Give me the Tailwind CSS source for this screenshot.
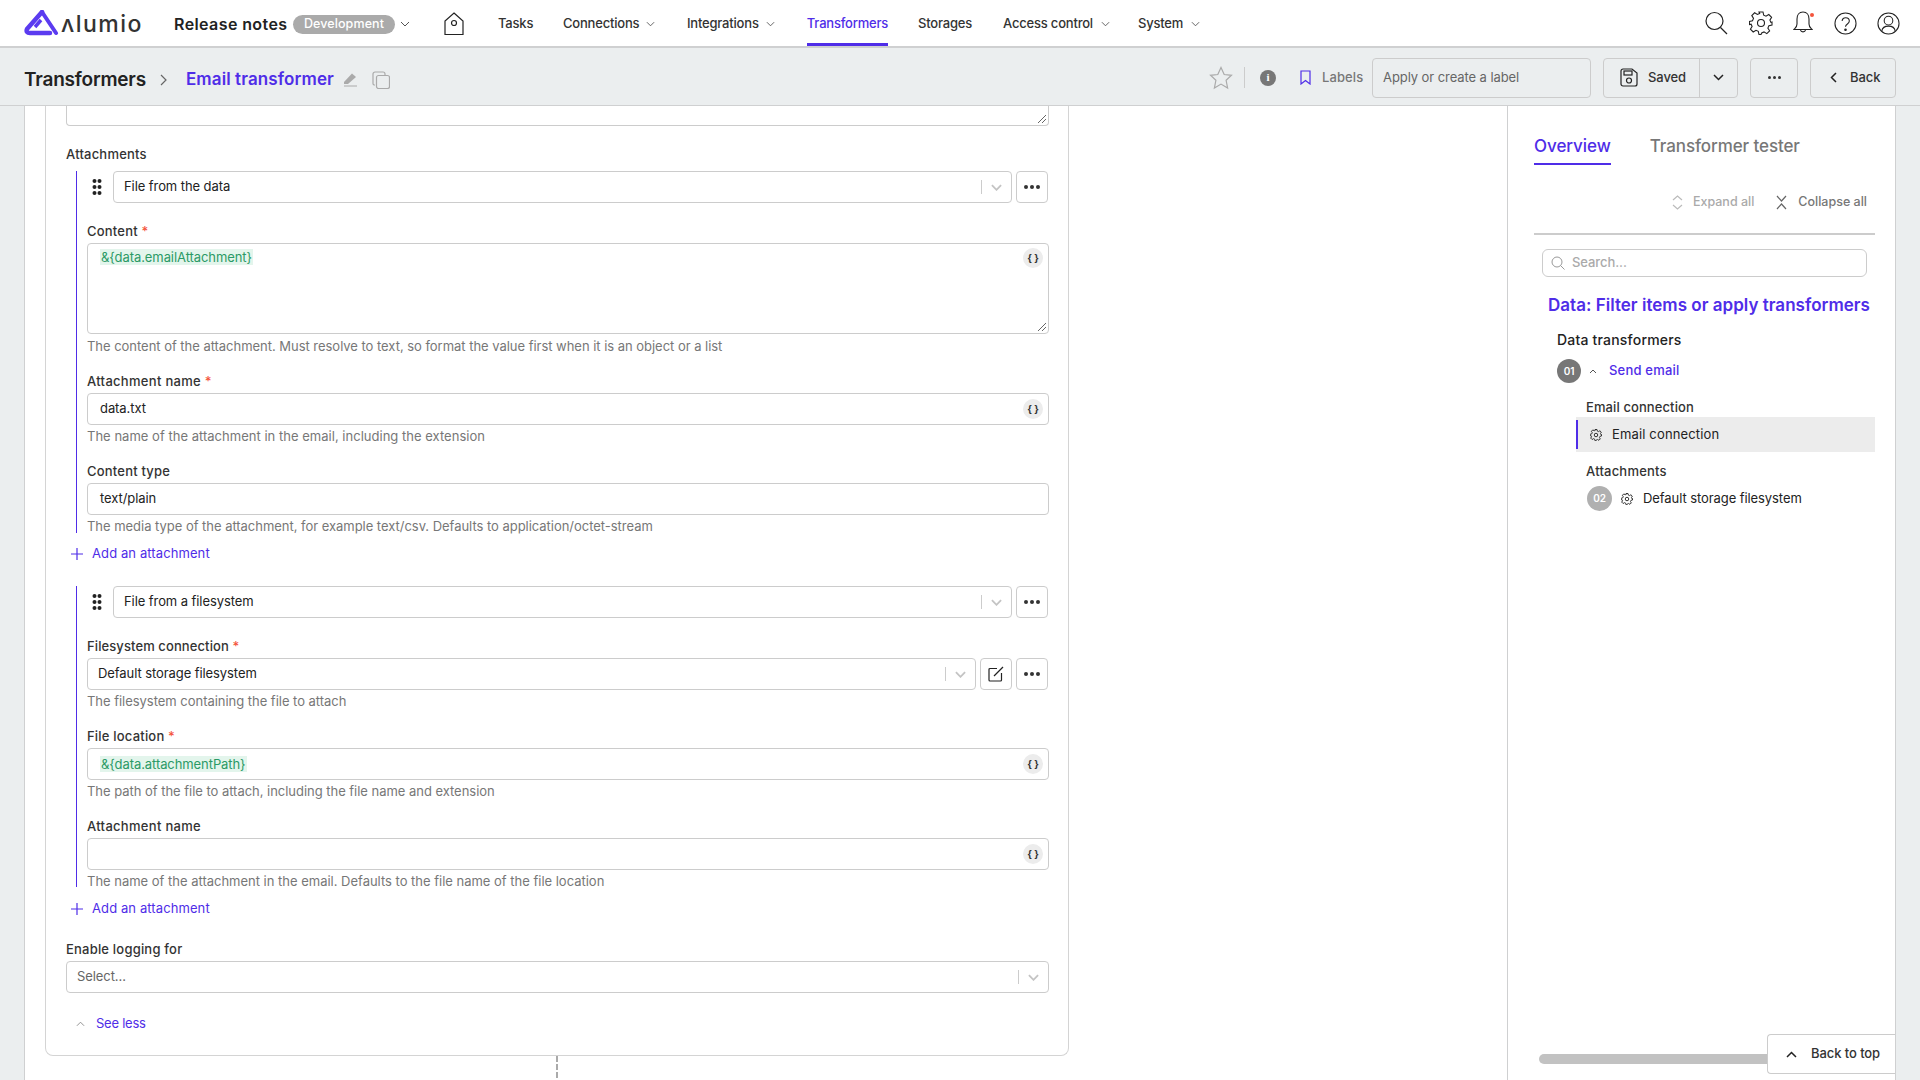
<!DOCTYPE html>
<html lang="en">
<head>
    <meta charset="UTF-8">
    <title>Email transformer - Alumio</title>
    <script src="https://cdn.jsdelivr.net/npm/@tailwindcss/browser@4"></script>
</head>
<body class="h-[1080px] w-[1920px] overflow-hidden flex flex-col bg-[#ebeeef] font-['Inter','Liberation_Sans',sans-serif] text-[13px] text-[#222] tracking-[-0.08px]">
    <!-- Top nav -->
    <header class="h-[48px] shrink-0 bg-white border-b-2 border-[#cfd0d1] flex items-center relative pt-[2px]">
        <svg class="ml-[24px] w-[35px] h-[26px] shrink-0 -mt-[2px]" viewBox="0 0 35 26" fill="none"><path d="M18 2 L3 19 Q1.500 23 6 23 L26 23" stroke="#5b3bf0" stroke-width="4.500" stroke-linecap="round" stroke-linejoin="round"/><path d="M18 2 L32 23" stroke="#5b3bf0" stroke-width="4" stroke-linecap="round"/><path d="M17 10 L11 17" stroke="#5b3bf0" stroke-width="3.500"/></svg>
        <span class="ml-[2px] w-[113px] text-[23px] font-medium text-[#333] tracking-[1.5px] leading-none">ʌlumio</span>
        <span class="text-[16px] font-semibold text-[#222] w-[118px] tracking-[0.4px]">Release notes</span>
        <span class="ml-[1px] w-[102px] h-[19px] rounded-full bg-[#aaa] text-white text-[12.500px] font-medium flex items-center justify-center tracking-[0.1px]">Development</span>
        <svg class="ml-[5px] w-[10px] h-[6px]" viewBox="0 0 10 6" fill="none" stroke="#555"><path d="M1 1l4 4 4-4"/></svg>
        <svg class="ml-[34px] w-[20px] h-[24px]" viewBox="0 0 20 24" fill="none" stroke="#222" stroke-width="1.200"><path d="M10 1 L19 9 V22.500 H1 V9 Z"/><circle cx="10" cy="11" r="2.500"/></svg>
        <nav class="ml-[34px] flex items-center h-full text-[13px] font-medium text-[#333] tracking-[-0.2px]">
            <a class="w-[65px]">Tasks</a>
            <a class="w-[124px] flex items-center gap-[7px]">Connections <svg class="w-[9px] h-[6px]" viewBox="0 0 10 6" fill="none" stroke="#555"><path d="M1 1l4 4 4-4"/></svg></a>
            <a class="w-[120px] flex items-center gap-[7px]">Integrations <svg class="w-[9px] h-[6px]" viewBox="0 0 10 6" fill="none" stroke="#555"><path d="M1 1l4 4 4-4"/></svg></a>
            <a class="w-[81px] h-full flex items-center justify-center text-[#4f2de8] border-b-[3px] pt-[3px] border-[#4f2de8]">Transformers</a>
            <a class="ml-[30px] w-[85px]">Storages</a>
            <a class="w-[135px] flex items-center gap-[8px]">Access control <svg class="w-[9px] h-[6px]" viewBox="0 0 10 6" fill="none" stroke="#555"><path d="M1 1l4 4 4-4"/></svg></a>
            <a class="flex items-center gap-[8px]">System <svg class="w-[9px] h-[6px]" viewBox="0 0 10 6" fill="none" stroke="#555"><path d="M1 1l4 4 4-4"/></svg></a>
        </nav>
        <div class="ml-auto mr-[20px] -mt-[2px] flex items-center">
            <svg class="w-[24px] h-[24px]" viewBox="0 0 24 24" fill="none" stroke="#222" stroke-width="1.200"><circle cx="10.500" cy="10" r="8.500"/><path d="M16.500 16.500 L23 23"/></svg>
            <svg class="ml-[21px] w-[24px] h-[24px]" viewBox="0 0 24 24" fill="none" stroke="#222" stroke-width="1.100"><circle cx="12" cy="12" r="3.500"/><path d="M10 1h4l.7 3.200 2.300 1 2.800-1.700 2.800 2.800-1.700 2.800 1 2.300L23 11v3l-3.100.8-1 2.300 1.700 2.700-2.800 2.800-2.800-1.700-2.300 1L12 23.500h-2l-.7-3.200-2.300-1-2.800 1.700-2.800-2.800 1.700-2.700-1-2.300L.4 13.500V10.500l3.100-.8 1-2.300-1.700-2.800 2.800-2.800 2.800 1.700 2.300-1z"/></svg>
            <svg class="ml-[20px] w-[20px] h-[24px]" viewBox="0 0 20 24" fill="none" stroke="#222" stroke-width="1.100"><path d="M10 1c-4 0-6 3-6 7v5c0 3-1.500 4-3 5.500h18c-1.500-1.500-3-2.500-3-5.500V8c0-4-2-7-6-7z"/><path d="M7.500 19c.5 2.500 4.500 2.500 5 0"/></svg>
            <svg class="ml-[21px] w-[23px] h-[23px]" viewBox="0 0 24 24" fill="none" stroke="#222" stroke-width="1.100"><circle cx="12" cy="12" r="11"/><path d="M8.500 9.500c0-5 7.500-4.500 7.500 0 0 3-4 3-4 6"/><circle cx="12" cy="18.500" r=".8" fill="#222"/></svg>
            <svg class="ml-[20px] w-[23px] h-[23px]" viewBox="0 0 24 24" fill="none" stroke="#222" stroke-width="1.100"><circle cx="12" cy="12" r="11"/><circle cx="12" cy="9" r="4.500"/><path d="M5 20c1-7 13-7 14 0"/></svg>
        </div>
        <span class="absolute left-[1810px] top-[13px] w-[4px] h-[4px] rounded-full bg-[#f4543c]"></span>
    </header>

    <!-- Sub header -->
    <div class="h-[58px] shrink-0 border-b border-[#cfd0d1] flex items-center pt-[2px]">
        <h1 class="ml-[24px] mt-[6px] text-[19px] font-semibold text-[#222] tracking-[-0.2px]">Transformers</h1>
        <svg class="ml-[14px] mt-[4px] w-[7px] h-[12px]" viewBox="0 0 7 12" fill="none" stroke="#666" stroke-width="1.200"><path d="M1 1l5 5-5 5"/></svg>
        <h2 class="ml-[19px] mt-[5px] text-[17px] font-semibold text-[#4f2de8] tracking-[0.1px]">Email transformer</h2>
        <svg class="ml-[9px] mt-[4px] w-[15px] h-[15px]" viewBox="0 0 15 15" fill="#aaa"><path d="M1 10 L9 1.500 L13 5 L5 12 H1z"/><path d="M1 14h13" stroke="#aaa"/></svg>
        <svg class="ml-[14px] mt-[4px] w-[18px] h-[18px]" viewBox="0 0 18 18" fill="none" stroke="#aaa" stroke-width="1.200"><rect x="4.500" y="4.500" width="13" height="13" rx="2"/><path d="M3 14H2a1.500 1.500 0 0 1-1-1.500V3a2 2 0 0 1 2-2h8a2 2 0 0 1 2 2v1"/></svg>
        <div class="ml-auto flex items-center">
            <svg class="w-[24px] h-[24px]" viewBox="0 0 24 24" fill="none" stroke="#aaa" stroke-width="1.200"><path d="M12 1.500l3.200 7 7.300.8-5.400 5 1.500 7.700-6.600-3.900L5.400 22l1.500-7.700-5.400-5 7.300-.8z"/></svg>
            <span class="ml-[11px] w-px h-[21px] bg-[#ccc]"></span>
            <span class="ml-[15px] w-[16px] h-[16px] rounded-full bg-[#777] text-white text-[11px] font-bold flex items-center justify-center font-['Liberation_Serif',serif]">i</span>
            <svg class="ml-[24px] w-[11px] h-[15px]" viewBox="0 0 11 15" fill="none" stroke="#4f2de8" stroke-width="1.200"><path d="M1 1h9v13L5.500 10.500 1 14z"/></svg>
            <span class="ml-[11px] text-[#777] w-[50px] font-medium tracking-[0.1px]">Labels</span>
            <div class="w-[219px] h-[40px] border border-[#ccc] rounded-[4px] flex items-center pl-[10px] text-[#666]">Apply or create a label</div>
            <div class="ml-[12px] w-[135px] h-[40px] border border-[#ccc] rounded-[4px] flex items-center">
                <span class="w-[96px] h-full border-r border-[#ccc] flex items-center pl-[16px] gap-[10px] font-medium text-[#333]">
                    <svg class="w-[18px] h-[19px]" viewBox="0 0 18 19" fill="none" stroke="#222" stroke-width="1.200"><path d="M3 1h9l5 4v11a2 2 0 0 1-2 2H3a2 2 0 0 1-2-2V3a2 2 0 0 1 2-2z"/><rect x="4" y="3" width="8" height="4"/><circle cx="9" cy="12.500" r="2.500"/></svg>
                    Saved
                </span>
                <span class="flex-1 flex items-center justify-center"><svg class="w-[11px] h-[7px]" viewBox="0 0 11 7" fill="none" stroke="#222" stroke-width="1.500"><path d="M1 1l4.500 4.500L10 1"/></svg></span>
            </div>
            <div class="ml-[12px] w-[48px] h-[40px] border border-[#ccc] rounded-[4px] flex items-center justify-center gap-[2px]">
                <i class="w-[3px] h-[3px] rounded-full bg-[#333]"></i><i class="w-[3px] h-[3px] rounded-full bg-[#333]"></i><i class="w-[3px] h-[3px] rounded-full bg-[#333]"></i>
            </div>
            <div class="ml-[12px] mr-[24px] w-[86px] h-[40px] border border-[#ccc] rounded-[4px] flex items-center pl-[19px] gap-[13px] font-medium text-[#333]">
                <svg class="w-[7px] h-[11px]" viewBox="0 0 7 11" fill="none" stroke="#222" stroke-width="1.500"><path d="M6 1L1.500 5.500 6 10"/></svg>
                Back
            </div>
        </div>
    </div>

    <!-- Main -->
    <main class="flex-1 min-h-0 ml-[24px] mr-[24px] bg-white border-x border-[#cfd0d1] flex">
        <div class="w-[1482px] overflow-hidden">
            <div class="ml-[20px] w-[1024px] border-x border-b border-[#d4d4d4] rounded-b-[8px] pl-[20px] pr-[19px] pb-[23px]">
                <div class="h-[20px] border-x border-b border-[#ccc] rounded-b-[4px] flex items-end justify-end">
                    <svg class="w-[9px] h-[9px] mr-[2px] mb-[2px]" viewBox="0 0 9 9" stroke="#666"><path d="M1 9L9 1M5 9L9 5"/></svg>
                </div>
                <div class="mt-[20px] h-[16px] leading-[16px] font-medium text-[#333] tracking-[0.2px]">Attachments</div>

                <!-- Attachment 1 -->
                <div class="mt-[9px] ml-[10px] border-l border-[#4f2de8] pl-[10px]">
                    <div class="flex items-center h-[32px]">
                        <svg class="w-[10px] h-[16px] ml-[5px] mr-[11px]" viewBox="0 0 10 16" fill="#222"><circle cx="2.500" cy="2" r="2"/><circle cx="7.500" cy="2" r="2"/><circle cx="2.500" cy="8" r="2"/><circle cx="7.500" cy="8" r="2"/><circle cx="2.500" cy="14" r="2"/><circle cx="7.500" cy="14" r="2"/></svg>
                        <div class="w-[899px] h-full border border-[#ccc] rounded-[4px] flex items-center pl-[10px]">
                            <span class="flex-1">File from the data</span>
                            <span class="w-px h-[14px] bg-[#ccc]"></span>
                            <svg class="mx-[9px] w-[11px] h-[7px]" viewBox="0 0 12 7" fill="none" stroke="#c4c4c4" stroke-width="2"><path d="M1 1l5 5 5-5"/></svg>
                        </div>
                        <div class="ml-[4px] w-[32px] h-full border border-[#ccc] rounded-[4px] flex items-center justify-center gap-[2px]">
                            <i class="w-[4px] h-[4px] rounded-full bg-[#333]"></i><i class="w-[4px] h-[4px] rounded-full bg-[#333]"></i><i class="w-[4px] h-[4px] rounded-full bg-[#333]"></i>
                        </div>
                    </div>

                    <div class="mt-[20px] h-[16px] leading-[16px] font-medium text-[#333] tracking-[0.2px]">Content <span class="text-[#f4543c]">*</span></div>
                    <div class="mt-[4px] h-[91px] border border-[#ccc] rounded-[4px] flex items-start pl-[12px] pt-[4px] pr-[5px] relative">
                        <span class="mt-[1px] h-[16px] leading-[16px] px-px bg-[#e3f5ec] text-[#2b9a66]">&amp;{data.emailAttachment}</span>
                        <span class="ml-auto w-[20px] h-[20px] rounded-full bg-[#ececec] flex items-center justify-center text-[10px] font-bold text-[#333]">{ }</span>
                        <svg class="absolute right-[2px] bottom-[2px] w-[9px] h-[9px]" viewBox="0 0 9 9" stroke="#666"><path d="M1 9L9 1M5 9L9 5"/></svg>
                    </div>
                    <div class="mt-[4px] h-[16px] leading-[16px] text-[#777] tracking-[-0.03px]">The content of the attachment. Must resolve to text, so format the value first when it is an object or a list</div>

                    <div class="mt-[19px] h-[16px] leading-[16px] font-medium text-[#333] tracking-[0.3px]">Attachment name <span class="text-[#f4543c]">*</span></div>
                    <div class="mt-[4px] h-[32px] border border-[#ccc] rounded-[4px] flex items-center pl-[12px] pr-[5px]">
                        <span class="flex-1">data.txt</span>
                        <span class="w-[20px] h-[20px] rounded-full bg-[#ececec] flex items-center justify-center text-[10px] font-bold text-[#333]">{ }</span>
                    </div>
                    <div class="mt-[3px] h-[16px] leading-[16px] text-[#777] tracking-[0.02px]">The name of the attachment in the email, including the extension</div>

                    <div class="mt-[19px] h-[16px] leading-[16px] font-medium text-[#333] tracking-[0.2px]">Content type</div>
                    <div class="mt-[4px] h-[32px] border border-[#ccc] rounded-[4px] flex items-center pl-[12px] pr-[5px]">text/plain</div>
                    <div class="mt-[3px] h-[15px] leading-[16px] text-[#777] tracking-[-0.03px]">The media type of the attachment, for example text/csv. Defaults to application/octet-stream</div>
                </div>
                <div class="mt-[13px] h-[16px] flex items-center ml-[5px] text-[#4f2de8] tracking-[0.1px]">
                    <svg class="w-[12px] h-[12px] mr-[9px]" viewBox="0 0 12 12" stroke="#4f2de8" stroke-width="1.200"><path d="M6 0v12M0 6h12"/></svg>
                    Add an attachment
                </div>

                <!-- Attachment 2 -->
                <div class="mt-[24px] ml-[10px] border-l border-[#4f2de8] pl-[10px]">
                    <div class="flex items-center h-[32px]">
                        <svg class="w-[10px] h-[16px] ml-[5px] mr-[11px]" viewBox="0 0 10 16" fill="#222"><circle cx="2.500" cy="2" r="2"/><circle cx="7.500" cy="2" r="2"/><circle cx="2.500" cy="8" r="2"/><circle cx="7.500" cy="8" r="2"/><circle cx="2.500" cy="14" r="2"/><circle cx="7.500" cy="14" r="2"/></svg>
                        <div class="w-[899px] h-full border border-[#ccc] rounded-[4px] flex items-center pl-[10px]">
                            <span class="flex-1">File from a filesystem</span>
                            <span class="w-px h-[14px] bg-[#ccc]"></span>
                            <svg class="mx-[9px] w-[11px] h-[7px]" viewBox="0 0 12 7" fill="none" stroke="#c4c4c4" stroke-width="2"><path d="M1 1l5 5 5-5"/></svg>
                        </div>
                        <div class="ml-[4px] w-[32px] h-full border border-[#ccc] rounded-[4px] flex items-center justify-center gap-[2px]">
                            <i class="w-[4px] h-[4px] rounded-full bg-[#333]"></i><i class="w-[4px] h-[4px] rounded-full bg-[#333]"></i><i class="w-[4px] h-[4px] rounded-full bg-[#333]"></i>
                        </div>
                    </div>

                    <div class="mt-[20px] h-[16px] leading-[16px] font-medium text-[#333] tracking-[0.1px]">Filesystem connection <span class="text-[#f4543c]">*</span></div>
                    <div class="mt-[4px] h-[32px] flex items-center">
                        <div class="w-[889px] h-full border border-[#ccc] rounded-[4px] flex items-center pl-[10px]">
                            <span class="flex-1">Default storage filesystem</span>
                            <span class="w-px h-[14px] bg-[#ccc]"></span>
                            <svg class="mx-[9px] w-[11px] h-[7px]" viewBox="0 0 12 7" fill="none" stroke="#c4c4c4" stroke-width="2"><path d="M1 1l5 5 5-5"/></svg>
                        </div>
                        <div class="ml-[4px] w-[32px] h-full border border-[#ccc] rounded-[4px] flex items-center justify-center">
                            <svg class="w-[16px] h-[16px]" viewBox="0 0 16 16" fill="none" stroke="#222" stroke-width="1.200"><path d="M9 2.500H2a1 1 0 0 0-1 1V14a1 1 0 0 0 1 1h10.500a1 1 0 0 0 1-1V7"/><path d="M6 10L15 1"/></svg>
                        </div>
                        <div class="ml-[4px] w-[32px] h-full border border-[#ccc] rounded-[4px] flex items-center justify-center gap-[2px]">
                            <i class="w-[4px] h-[4px] rounded-full bg-[#333]"></i><i class="w-[4px] h-[4px] rounded-full bg-[#333]"></i><i class="w-[4px] h-[4px] rounded-full bg-[#333]"></i>
                        </div>
                    </div>
                    <div class="mt-[3px] h-[16px] leading-[16px] text-[#777] tracking-[-0.03px]">The filesystem containing the file to attach</div>

                    <div class="mt-[19px] h-[16px] leading-[16px] font-medium text-[#333] tracking-[0.2px]">File location <span class="text-[#f4543c]">*</span></div>
                    <div class="mt-[4px] h-[32px] border border-[#ccc] rounded-[4px] flex items-center pl-[12px] pr-[5px]">
                        <span class="h-[16px] leading-[16px] px-px bg-[#e3f5ec] text-[#2b9a66]">&amp;{data.attachmentPath}</span>
                        <span class="ml-auto w-[20px] h-[20px] rounded-full bg-[#ececec] flex items-center justify-center text-[10px] font-bold text-[#333]">{ }</span>
                    </div>
                    <div class="mt-[3px] h-[16px] leading-[16px] text-[#777] tracking-[-0.03px]">The path of the file to attach, including the file name and extension</div>

                    <div class="mt-[19px] h-[16px] leading-[16px] font-medium text-[#333] tracking-[0.3px]">Attachment name</div>
                    <div class="mt-[4px] h-[32px] border border-[#ccc] rounded-[4px] flex items-center justify-end pr-[5px]">
                        <span class="w-[20px] h-[20px] rounded-full bg-[#ececec] flex items-center justify-center text-[10px] font-bold text-[#333]">{ }</span>
                    </div>
                    <div class="mt-[3px] h-[14px] leading-[16px] text-[#777] tracking-[-0.01px]">The name of the attachment in the email. Defaults to the file name of the file location</div>
                </div>
                <div class="mt-[14px] h-[16px] flex items-center ml-[5px] text-[#4f2de8] tracking-[0.1px]">
                    <svg class="w-[12px] h-[12px] mr-[9px]" viewBox="0 0 12 12" stroke="#4f2de8" stroke-width="1.200"><path d="M6 0v12M0 6h12"/></svg>
                    Add an attachment
                </div>

                <div class="mt-[24px] h-[16px] leading-[16px] font-medium text-[#333] tracking-[0.2px]">Enable logging for</div>
                <div class="mt-[4px] h-[32px] border border-[#ccc] rounded-[4px] flex items-center pl-[10px] text-[#666]">
                    <span class="flex-1">Select...</span>
                    <span class="w-px h-[14px] bg-[#ccc]"></span>
                    <svg class="mx-[9px] w-[11px] h-[7px]" viewBox="0 0 12 7" fill="none" stroke="#c4c4c4" stroke-width="2"><path d="M1 1l5 5 5-5"/></svg>
                </div>
                <div class="mt-[23px] h-[16px] flex items-center ml-[10px] text-[#4f2de8] tracking-[-0.25px]">
                    <svg class="w-[9px] h-[6px] mr-[11px]" viewBox="0 0 10 6" fill="none" stroke="#888"><path d="M1 5l4-4 4 4"/></svg>
                    See less
                </div>
            </div>
            <div class="ml-[531px] h-[30px] w-0 border-l-2 border-dashed border-[#aaa]"></div>
        </div>

        <!-- Overview panel -->
        <aside class="flex-1 min-w-0 border-l border-[#cfd0d1] flex flex-col relative pl-[26px]">
            <div class="mt-[24px] flex items-start h-[35px] text-[17px]">
                <span class="h-[35px] pt-[4px] leading-[24px] border-b-2 border-[#4f2de8] text-[#4f2de8] font-medium tracking-[-0.05px]">Overview</span>
                <span class="ml-[39px] pt-[4px] leading-[24px] text-[#777] font-medium tracking-[-0.1px]">Transformer tester</span>
            </div>
            <div class="mt-[29px] h-[16px] w-[341px] pr-[8px] flex items-center justify-end text-[12.500px] font-medium tracking-[0px]">
                <svg class="w-[11px] h-[15px] mr-[10px]" viewBox="0 0 11 15" fill="none" stroke="#bbb" stroke-width="1.200"><path d="M1 5l4.500-4L10 5M1 10l4.500 4L10 10"/></svg>
                <span class="text-[#aaa] mr-[22px]">Expand all</span>
                <svg class="w-[11px] h-[15px] mr-[11px]" viewBox="0 0 11 15" fill="none" stroke="#666" stroke-width="1.200"><path d="M1 1l4.500 5L10 1M1 14l4.500-5L10 14"/></svg>
                <span class="text-[#777]">Collapse all</span>
            </div>
            <div class="mt-[23px] w-[341px] h-[2px] bg-[#ccc] shrink-0"></div>
            <div class="mt-[14px] ml-[8px] w-[325px] h-[28px] border border-[#ccc] rounded-[6px] flex items-center pl-[8px] gap-[7px] text-[#aaa] font-medium">
                <svg class="w-[14px] h-[14px]" viewBox="0 0 14 14" fill="none" stroke="#999"><circle cx="6" cy="6" r="5"/><path d="M9.500 9.500L13.500 13.500"/></svg>
                Search...
            </div>
            <div class="mt-[17px] ml-[14px] h-[22px] leading-[22px] text-[17px] font-semibold text-[#4f2de8] tracking-[0.02px] whitespace-nowrap">Data: Filter items or apply transformers</div>
            <div class="mt-[14px] ml-[23px] h-[20px] leading-[20px] text-[14px] font-medium text-[#222] tracking-[0.2px]">Data transformers</div>
            <div class="mt-[9px] ml-[23px] h-[24px] flex items-center">
                <span class="w-[24px] h-[24px] rounded-full bg-[#777] text-white text-[10px] font-semibold flex items-center justify-center">01</span>
                <svg class="ml-[8px] w-[8px] h-[5px]" viewBox="0 0 8 5" fill="none" stroke="#555"><path d="M1 4l3-3 3 3"/></svg>
                <span class="ml-[12px] font-medium text-[#4f2de8] tracking-[0.2px]">Send email</span>
            </div>
            <div class="mt-[16px] ml-[52px] h-[16px] leading-[16px] font-medium text-[#333] tracking-[0.1px]">Email connection</div>
            <div class="mt-[2px] ml-[42px] h-[35px] w-[299px] bg-[#ececec] flex items-center">
                <i class="w-[2px] h-[29px] bg-[#4f2de8]"></i>
                <svg class="ml-[12px] w-[12px] h-[12px]" viewBox="0 0 24 24" fill="none" stroke="#333" stroke-width="2"><circle cx="12" cy="12" r="3.500"/><path d="M10 1h4l.7 3.200 2.300 1 2.800-1.700 2.800 2.800-1.700 2.800 1 2.300L23 11v3l-3.100.8-1 2.300 1.700 2.700-2.800 2.800-2.800-1.700-2.300 1L12 23.500h-2l-.7-3.200-2.300-1-2.800 1.700-2.800-2.800 1.700-2.700-1-2.300L.4 13.500V10.500l3.100-.8 1-2.300-1.700-2.800 2.800-2.800 2.800 1.700 2.300-1z"/></svg>
                <span class="ml-[10px] text-[#222] tracking-[0.15px]">Email connection</span>
            </div>
            <div class="mt-[11px] ml-[52px] h-[16px] leading-[16px] font-medium text-[#333] tracking-[0.2px]">Attachments</div>
            <div class="mt-[7px] ml-[53px] h-[25px] flex items-center">
                <span class="w-[25px] h-[25px] rounded-full bg-[#b0b0b0] text-white text-[10px] font-semibold flex items-center justify-center">02</span>
                <svg class="ml-[9px] w-[12px] h-[12px]" viewBox="0 0 24 24" fill="none" stroke="#333" stroke-width="2"><circle cx="12" cy="12" r="3.500"/><path d="M10 1h4l.7 3.200 2.300 1 2.800-1.700 2.800 2.800-1.700 2.800 1 2.300L23 11v3l-3.100.8-1 2.300 1.700 2.700-2.800 2.800-2.800-1.700-2.300 1L12 23.500h-2l-.7-3.200-2.300-1-2.800 1.700-2.800-2.800 1.700-2.700-1-2.300L.4 13.500V10.500l3.100-.8 1-2.300-1.700-2.800 2.800-2.800 2.800 1.700 2.300-1z"/></svg>
                <span class="ml-[10px] text-[#222]">Default storage filesystem</span>
            </div>
            <div class="mt-auto mb-[16px] ml-[5px] h-[10px] w-[240px] rounded-full bg-[#c2c2c2]"></div>
            <button class="absolute right-0 bottom-[6px] w-[128px] h-[40px] bg-white border border-r-0 border-[#ccc] rounded-l-[4px] flex items-center pl-[18px] gap-[14px] font-medium text-[#333]">
                <svg class="w-[11px] h-[7px]" viewBox="0 0 11 7" fill="none" stroke="#222" stroke-width="1.500"><path d="M1 6l4.500-4.500L10 6"/></svg>
                Back to top
            </button>
        </aside>
    </main>
</body>
</html>
